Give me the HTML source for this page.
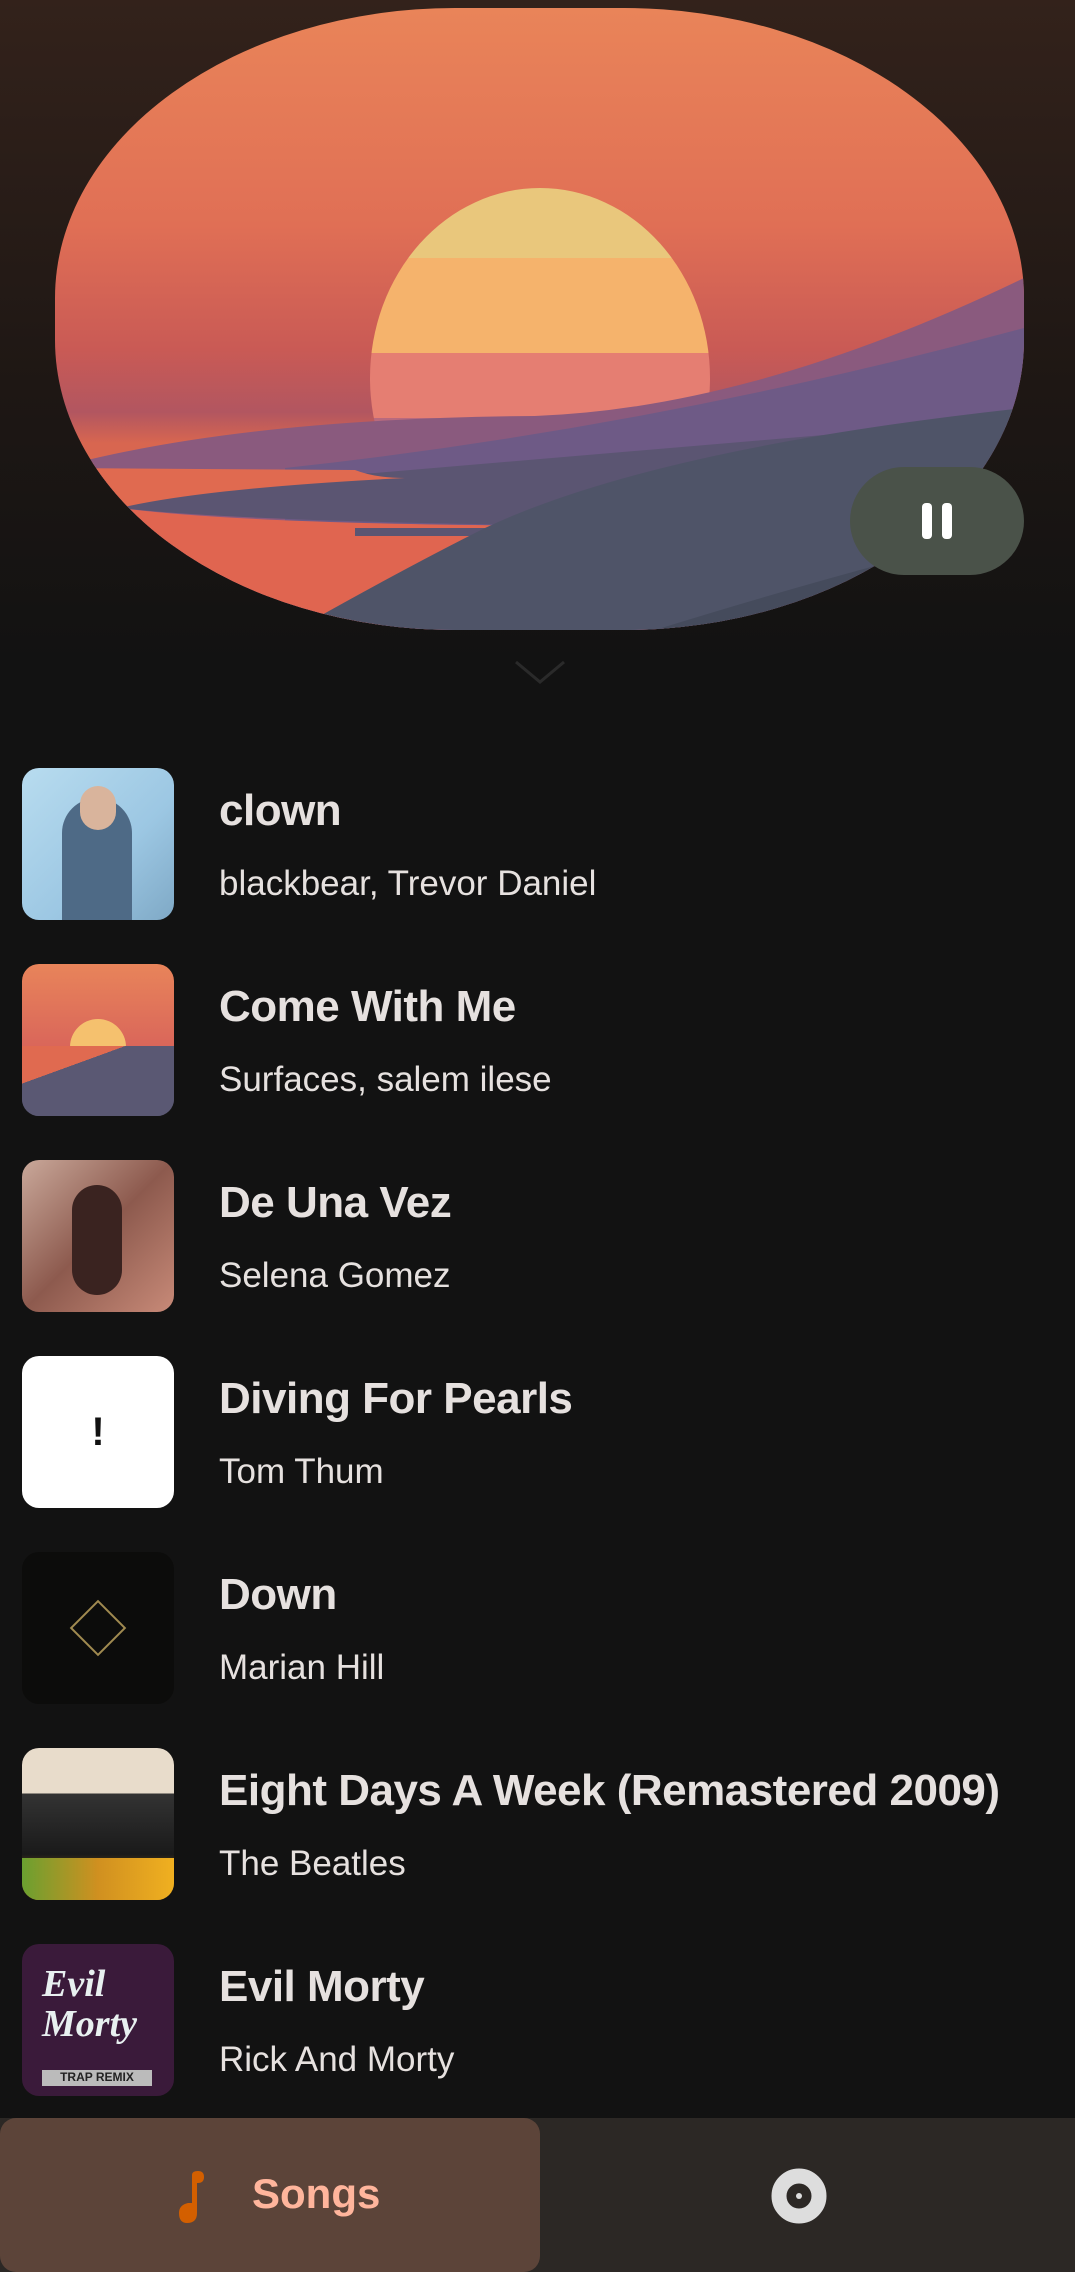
<!DOCTYPE html>
<html><head><meta charset="utf-8"><style>
*{margin:0;padding:0;box-sizing:border-box}
body{width:1075px;height:2272px;overflow:hidden;background:#121212;font-family:"Liberation Sans",sans-serif;position:relative}
.top{position:absolute;left:0;top:0;width:1075px;height:700px;background:linear-gradient(#33221b,#1e1714 55%,#121212 95%)}
.art{position:absolute;left:55px;top:8px;width:969px;height:622px;border-radius:400px/290px;overflow:hidden;background:linear-gradient(#e98459 0%,#e06f55 35%,#c95a55 55%,#b25660 65%,#d86650 70%,#e0704f 100%)}
.pause{position:absolute;left:850px;top:467px;width:174px;height:108px;border-radius:54px;background:#4a5249}
.pause i{position:absolute;top:36px;width:10px;height:36px;background:#fff;border-radius:4px}
.item{position:absolute;left:0;width:1075px;height:152px}
.th{position:absolute;left:22px;top:0;width:152px;height:152px;border-radius:17px;overflow:hidden}
.t{position:absolute;left:219px;top:18px;font-size:44px;font-weight:bold;color:#e6e1df;white-space:nowrap;letter-spacing:-0.5px}
.s{position:absolute;left:219px;top:96px;font-size:35px;color:#e6e1df;white-space:nowrap}
.nav{position:absolute;left:0;top:2118px;width:1075px;height:154px;background:#2c2825}
.tab{position:absolute;left:0;top:0;width:540px;height:154px;background:#5c4439;border-radius:16px}
</style></head><body>
<div class="top"></div>
<div class="art">
<svg width="969" height="622" viewBox="0 0 969 622">
<defs><clipPath id="sun"><ellipse cx="485" cy="370" rx="170" ry="190"/></clipPath></defs>
<g clip-path="url(#sun)">
<rect x="300" y="170" width="400" height="80" fill="#e9c77c"/>
<rect x="300" y="250" width="400" height="95" fill="#f5b36c"/>
<rect x="300" y="345" width="400" height="65" fill="#e57e72"/>
<rect x="300" y="410" width="400" height="60" fill="#b86a7e"/>
</g>
<rect x="0" y="455" width="969" height="170" fill="#e06a50"/>
<path d="M20 455 Q200 410 480 408 Q700 400 969 270 L969 622 L0 622 Z" fill="#8a5a7e"/>
<path d="M230 460 Q600 420 969 320 L969 622 L230 622 Z" fill="#6e5a86"/>
<path d="M65 500 Q140 470 320 465 L969 410 L969 520 L580 518 Q200 515 65 500Z" fill="#5b5572"/>
<path d="M0 460 L300 462 Q320 470 350 470 Q150 480 65 500 L0 500Z" fill="#e06a50"/>
<path d="M0 500 L65 500 Q200 518 580 518 L500 560 Q430 600 300 622 L0 622Z" fill="#e06550"/>
<rect x="300" y="520" width="200" height="8" fill="#5b5572"/>
<path d="M240 622 Q350 560 430 520 Q600 440 969 400 L969 622Z" fill="#4f5468"/>
<path d="M600 622 Q800 560 969 520 L969 622Z" fill="#454b5c"/>
</svg>
</div>
<div class="pause"><i style="left:72px"></i><i style="left:92px"></i></div>
<svg style="position:absolute;left:514px;top:660px" width="52" height="26"><path d="M2 2 L26 22 L50 2" stroke="#2a2a2a" stroke-width="3" fill="none"/></svg>

<div class="item" style="top:768px"><div class="th" style="background:linear-gradient(135deg,#b8dcef,#9cc7e3 60%,#7fa9c6)"><div style="position:absolute;left:40px;top:30px;width:70px;height:122px;border-radius:35px 35px 0 0;background:#4e6a86"></div><div style="position:absolute;left:58px;top:18px;width:36px;height:44px;border-radius:18px;background:#d9b49c"></div></div><div class="t">clown</div><div class="s">blackbear, Trevor Daniel</div></div>
<div class="item" style="top:964px"><div class="th" style="background:linear-gradient(#e8845a,#d8635a 60%,#5a5873 60%)"><div style="position:absolute;left:48px;top:55px;width:56px;height:56px;border-radius:50%;background:linear-gradient(#f5c16e 50%,#e88070 50%)"></div><div style="position:absolute;left:0;top:82px;width:152px;height:70px;background:linear-gradient(160deg,#e06a50 30%,#5a5873 30%)"></div></div><div class="t">Come With Me</div><div class="s">Surfaces, salem ilese</div></div>
<div class="item" style="top:1160px"><div class="th" style="background:linear-gradient(135deg,#c9a89a,#8d5a4e 50%,#c88a78)"><div style="position:absolute;left:50px;top:25px;width:50px;height:110px;border-radius:25px;background:#3a2320"></div></div><div class="t">De Una Vez</div><div class="s">Selena Gomez</div></div>
<div class="item" style="top:1356px"><div class="th" style="background:#fff;color:#111;font-size:40px;font-weight:bold;text-align:center;line-height:152px">!</div><div class="t">Diving For Pearls</div><div class="s">Tom Thum</div></div>
<div class="item" style="top:1552px"><div class="th" style="background:#0c0c0b"><div style="position:absolute;left:56px;top:56px;width:40px;height:40px;border:2px solid #a08a50;transform:rotate(45deg)"></div></div><div class="t">Down</div><div class="s">Marian Hill</div></div>
<div class="item" style="top:1748px"><div class="th" style="background:linear-gradient(#e8dccb 30%,#333 30%,#1a1a1a 70%,#e0a020)"><div style="position:absolute;left:0;top:110px;width:152px;height:42px;background:linear-gradient(90deg,#6aa030,#d09020,#f0b020)"></div></div><div class="t">Eight Days A Week (Remastered 2009)</div><div class="s">The Beatles</div></div>
<div class="item" style="top:1944px"><div class="th" style="background:#3a1a3a"><div style="position:absolute;left:20px;top:20px;color:#e8f0f0;font:italic bold 38px 'Liberation Serif',serif;line-height:40px">Evil<br>Morty</div><div style="position:absolute;left:20px;top:126px;width:110px;height:16px;background:#bbb;color:#222;font-size:12px;font-weight:bold;text-align:center">TRAP REMIX</div></div><div class="t">Evil Morty</div><div class="s">Rick And Morty</div></div>

<div class="nav"><div class="tab">
<svg style="position:absolute;left:176px;top:53px" width="36" height="52" viewBox="0 0 36 52"><path d="M16 4 Q16 0 22 0 Q28 0 28 6 Q28 12 22 12 L21 12 L21 42 Q21 52 11 52 Q3 52 3 42 Q3 34 12 32 L16 32Z" fill="#d35f00"/></svg>
<div style="position:absolute;left:252px;top:52px;font-size:42px;font-weight:bold;color:#ffb59c">Songs</div>
</div>
<svg style="position:absolute;left:771px;top:50px" width="56" height="56"><circle cx="28" cy="28" r="20" fill="none" stroke="#ddd" stroke-width="15"/><circle cx="28" cy="28" r="3" fill="#ddd"/></svg>
</div>
</body></html>
